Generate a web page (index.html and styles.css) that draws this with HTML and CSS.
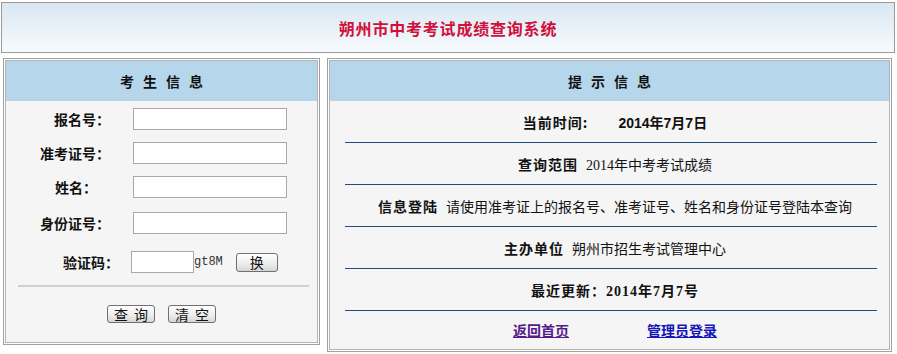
FILE: index.html
```html
<!DOCTYPE html>
<html lang="zh-CN">
<head>
    <meta charset="UTF-8">
    <title>朔州市中考考试成绩查询系统</title>
    <link rel="stylesheet" href="styles.css">
</head>
<body>
    <div class="page">
        <div class="banner">
            <h1>朔州市中考考试成绩查询系统</h1>
        </div>

        <div class="main">
            <div class="panel panel-left">
                <div class="panel-inner">
                    <div class="panel-title">考生信息</div>
                    <form class="login-form">
                        <div class="field">
                            <label for="bmh">报名号：</label>
                            <input type="text" id="bmh">
                        </div>
                        <div class="field">
                            <label for="zkzh">准考证号：</label>
                            <input type="text" id="zkzh">
                        </div>
                        <div class="field">
                            <label for="xm" class="short">姓名：</label>
                            <input type="text" id="xm">
                        </div>
                        <div class="field field-id">
                            <label for="sfzh">身份证号：</label>
                            <input type="text" id="sfzh">
                        </div>
                        <div class="captcha">
                            <label for="yzm">验证码：</label>
                            <input type="text" id="yzm">
                            <span class="code">gt8M</span>
                            <button type="button" class="btn btn-swap">换</button>
                        </div>
                        <div class="divider"></div>
                        <div class="actions">
                            <button type="button" class="btn">查询</button>
                            <button type="reset" class="btn">清空</button>
                        </div>
                    </form>
                </div>
            </div>

            <div class="panel panel-right">
                <div class="panel-inner">
                    <div class="panel-title">提示信息</div>
                    <div class="notes">
                        <div class="note">
                            <b>当前时间:</b><b class="date">2014年7月7日</b>
                        </div>
                        <div class="note">
                            <b>查询范围</b><span class="serif">2014年中考考试成绩</span>
                        </div>
                        <div class="note">
                            <b>信息登陆</b><span>请使用准考证上的报名号、准考证号、姓名和身份证号登陆本查询</span>
                        </div>
                        <div class="note">
                            <b>主办单位</b><span>朔州市招生考试管理中心</span>
                        </div>
                        <div class="note">
                            <b class="serif">最近更新：2014年7月7号</b>
                        </div>
                        <div class="note note-links">
                            <a href="#" class="visited">返回首页</a>
                            <a href="#">管理员登录</a>
                        </div>
                    </div>
                </div>
            </div>
        </div>
    </div>
</body>
</html>
```

FILE: styles.css
```css
body {
    margin: 0;
    background: #fff;
    font-family: "Noto Sans CJK SC", sans-serif;
    font-size: 14px;
    color: #111;
}
.page {
    width: 894px;
    padding: 2px 0 0 1px;
}
.banner {
    display: flex;
    justify-content: center;
    align-items: center;
    height: 49px;
    border: 1px solid #9a9a9a;
    background: linear-gradient(to bottom, #d9e7f2 0%, #f7fafd 100%);
}
.banner h1 {
    margin: 0;
    font-size: 16px;
    font-weight: bold;
    letter-spacing: 0.8px;
    color: #d0103a;
}
.main {
    display: flex;
    align-items: flex-start;
    gap: 7px;
    margin-top: 5px;
    padding-left: 2px;
}
.panel {
    box-sizing: border-box;
    border: 1px solid #a0a0a0;
    padding: 1px;
    background: #fff;
}
.panel-left {
    width: 317px;
    height: 287px;
}
.panel-right {
    width: 565px;
    height: 294px;
}
.panel-inner {
    box-sizing: border-box;
    height: 100%;
    border: 1px solid #b4b4b4;
    background: #f5f5f5;
}
.panel-title {
    display: flex;
    justify-content: center;
    align-items: center;
    height: 40px;
    padding-left: 9px;
    background: #b5d6eb;
    font-weight: bold;
    letter-spacing: 9px;
}

/* 考生信息 */
.login-form {
    margin: 0;
    padding-top: 1px;
}
.field {
    display: flex;
    align-items: center;
    height: 34px;
}
.field-id {
    margin-top: 2px;
}
.field label {
    width: 104px;
    text-align: right;
    font-weight: bold;
    margin-right: 23px;
}
.field label.short {
    box-sizing: border-box;
    padding-right: 13px;
}
.login-form input {
    box-sizing: border-box;
    width: 154px;
    height: 22px;
    border: 1px solid #a9a9a9;
    background: #fff;
    padding: 0 3px;
}
.captcha {
    display: flex;
    align-items: center;
    height: 22px;
    margin-top: 11px;
    padding-left: 57px;
}
.captcha label {
    font-weight: bold;
    margin-right: 12px;
}
.captcha input {
    width: 63px;
}
.code {
    font-family: "Liberation Mono", monospace;
    font-size: 12px;
    color: #333;
}
.btn {
    box-sizing: border-box;
    height: 18px;
    padding: 0;
    border: 1px solid #707070;
    border-radius: 3px;
    background: linear-gradient(to bottom, #ffffff 0%, #ececec 60%, #d6d6d6 100%);
    font-family: "Noto Sans CJK SC", sans-serif;
    font-size: 14px;
    line-height: 16px;
    color: #111;
    cursor: pointer;
}
.btn-swap {
    width: 42px;
    height: 19px;
    margin-left: 13px;
}
.divider {
    height: 2px;
    margin: 12px 8px 0 12px;
    background: #d0d0d0;
}
.actions {
    display: flex;
    justify-content: center;
    gap: 13px;
    margin-top: 18px;
}
.actions .btn {
    width: 48px;
    letter-spacing: 6px;
    text-indent: 6px;
}

/* 提示信息 */
.notes {
    padding: 0 12px 0 15px;
}
.note {
    display: flex;
    justify-content: center;
    align-items: center;
    gap: 8px;
    height: 41px;
    padding-left: 8px;
    border-bottom: 1px solid #1f4f7e;
}
.note b {
    letter-spacing: 1px;
}
.note .date {
    margin-left: 22px;
    letter-spacing: 0;
    font-family: "Liberation Sans", "Noto Sans CJK SC", sans-serif;
}
.serif {
    font-family: "Liberation Serif", "Noto Sans CJK SC", serif;
}
.note-links {
    height: 38px;
    gap: 78px;
    border-bottom: none;
}
.note-links a {
    font-weight: bold;
    color: #1515b8;
    text-decoration: underline;
}
.note-links a.visited {
    color: #551a8b;
}
```
